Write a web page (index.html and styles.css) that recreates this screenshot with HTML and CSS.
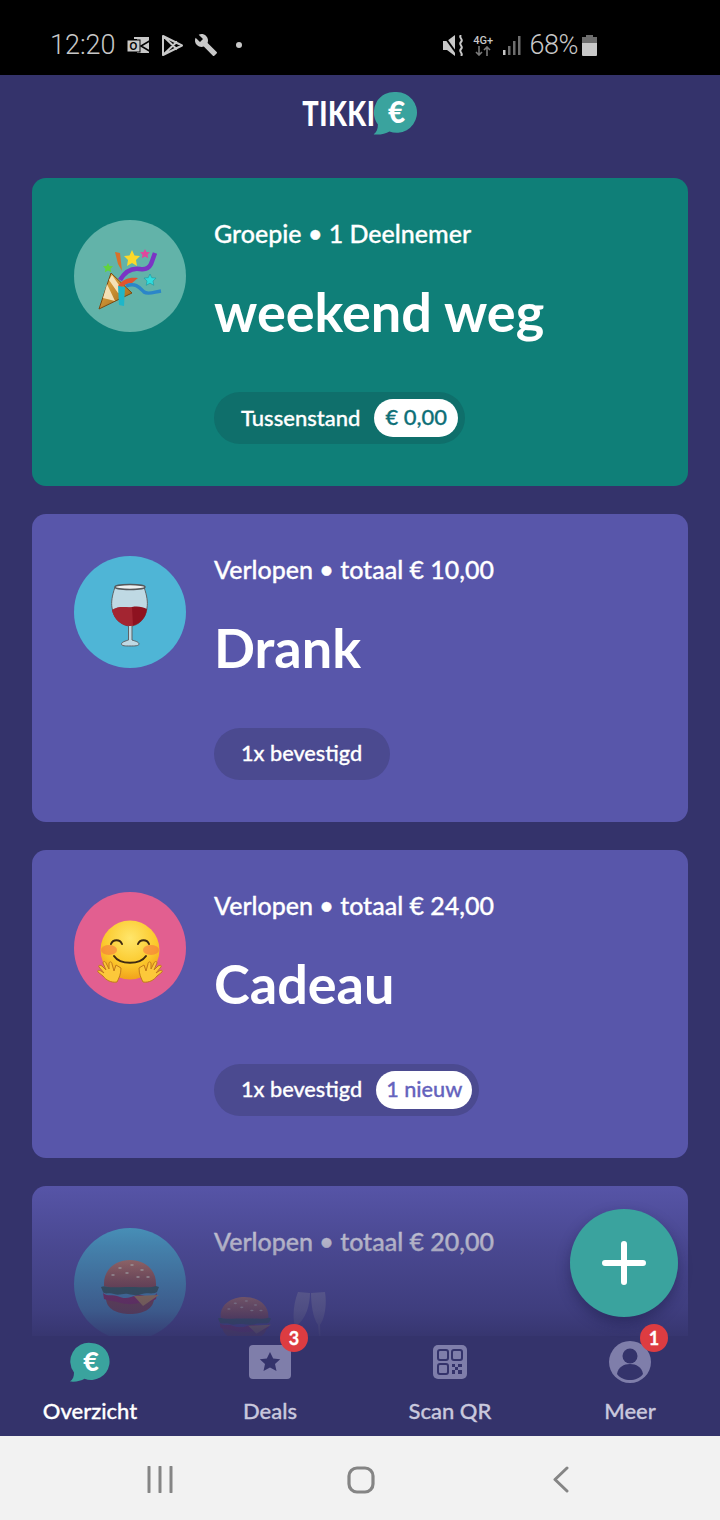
FILE: index.html
```html
<!DOCTYPE html>
<html lang="nl">
   <head>
      <meta charset="utf-8">
      <meta name="viewport" content="width=device-width, initial-scale=1">
      <title>Tikkie overzicht</title>
      <link rel="stylesheet" href="styles.css">
   </head>
   <body>
      <svg class="defs" width="0" height="0" aria-hidden="true">
         <defs>
            <linearGradient id="bun" x1="0" y1="0" x2="0" y2="1">
               <stop offset="0" stop-color="#d98c62"/>
               <stop offset="1" stop-color="#a4523a"/>
            </linearGradient>
            <linearGradient id="gold" x1="0" y1="0" x2="1" y2="1">
               <stop offset="0" stop-color="#f0b548"/>
               <stop offset="1" stop-color="#9a6118"/>
            </linearGradient>
            <radialGradient id="face" cx="0.5" cy="0.3" r="0.75">
               <stop offset="0" stop-color="#ffe66b"/>
               <stop offset="0.6" stop-color="#fbc92c"/>
               <stop offset="1" stop-color="#f09a17"/>
            </radialGradient>
            <symbol id="burger" viewBox="0 0 60 54" preserveAspectRatio="none">
               <path d="M6 38c0 11 11 16 24 16s24-5 24-16z" fill="#9a4c33"/>
               <path d="M3 33c5 4 9 1 14 3s9 3 14 1 9-3 14-1 9 1 12-3l-1 6c-6 4-12 3-17 4s-11 2-18 0-12-2-17-4z" fill="#a8274f"/>
               <path d="M34 36l25-1-16 11z" fill="#e7a93a"/>
               <path d="M1 27c4-2 9 1 14-1s9 2 15 0 9 2 14 0 10-1 15 1l-2 5c-5 3-10 0-15 2s-9 1-14 0-9 2-14 0-9 1-11-2z" fill="#2f6b4a"/>
               <path d="M4 26C3 9 16 0 30 0s27 9 26 26c-5 2-12 1-26 1S9 28 4 26z" fill="url(#bun)"/>
               <g fill="#f3dcae">
                  <ellipse cx="20" cy="8" rx="1.8" ry="1"/>
                  <ellipse cx="32" cy="5" rx="1.8" ry="1"/>
                  <ellipse cx="42" cy="10" rx="1.8" ry="1"/>
                  <ellipse cx="27" cy="13" rx="1.8" ry="1"/>
                  <ellipse cx="13" cy="15" rx="1.8" ry="1"/>
                  <ellipse cx="38" cy="17" rx="1.8" ry="1"/>
                  <ellipse cx="48" cy="17" rx="1.8" ry="1"/>
               </g>
            </symbol>
            <symbol id="bubble" viewBox="0 0 40 40">
               <path d="M21 1a18.500 18.500 0 1 1-6.500 35.800C11 39 6 40 0 39.500c3-2 4-5 4-9A18.500 18.500 0 0 1 21 1z" fill="#3aa39e"/>
               <text x="21" y="29" text-anchor="middle" font-family="Lato, sans-serif" font-weight="900" font-size="27" fill="#fff">€</text>
            </symbol>
         </defs>
      </svg>

      <div class="screen">
         <header class="statusbar">
            <div class="status-left">
               <span class="clock">12:20</span>
               <svg class="st-outlook" width="23" height="16" viewBox="0 0 23 16">
                  <path d="M7 0h15v16H10V2H7z" fill="#c8c8c8"/>
                  <path d="M22.500 4L14 9l8.500 5" fill="none" stroke="#000" stroke-width="1.600"/>
                  <rect x="0" y="3" width="13" height="12" fill="#c8c8c8" stroke="#000" stroke-width="1"/>
                  <text x="6.500" y="12.800" class="st-o">O</text>
               </svg>
               <svg class="st-play" width="23" height="23" viewBox="0 0 23 23">
                  <path d="M2 2l19 9.500-19 9.500zM2 2l10 9.500L2 21M12 11.500l4-4M12 11.500l4 4" fill="none" stroke="#c8c8c8" stroke-width="2" stroke-linejoin="round"/>
               </svg>
               <svg class="st-wrench" width="24" height="24" viewBox="0 0 24 24">
                  <path d="M22.700 19l-9.100-9.100c.9-2.300.4-5-1.500-6.900-2-2-5-2.400-7.400-1.300L9 6 6 9 1.600 4.700C.4 7.100.9 10.100 2.900 12.100c1.900 1.900 4.600 2.400 6.900 1.500l9.100 9.100c.4.400 1 .4 1.400 0l2.300-2.300c.5-.4.5-1.100.1-1.400z" fill="#c8c8c8"/>
               </svg>
               <span class="st-dot"></span>
            </div>
            <div class="status-right">
               <svg width="22" height="21" viewBox="0 0 22 21">
                  <path d="M0 6h4l8-6v21l-8-6H0z" fill="#c8c8c8"/>
                  <path d="M1 1l13 18" stroke="#000" stroke-width="2"/>
                  <path d="M18 0c-3 3 3 4 0 7s3 4 0 7 3 4 0 7" fill="none" stroke="#c8c8c8" stroke-width="2"/>
               </svg>
               <div class="st-net">
                  <span>4G+</span>
                  <svg width="16" height="10" viewBox="0 0 16 10"><path d="M4 0v9M1 6l3 3 3-3M12 10V1M9 4l3-3 3 3" fill="none" stroke="#7a7a7a" stroke-width="1.600"/></svg>
               </div>
               <svg class="st-signal" width="20" height="21" viewBox="0 0 20 21">
                  <path d="M1 15h2.500v5H1z" fill="#c8c8c8"/>
                  <path d="M6 11h2.500v9H6zM11 6h2.500v14H11zM16 1h2.500v19H16z" fill="#6e6e6e"/>
               </svg>
               <span class="clock st-pct">68%</span>
               <svg class="st-batt" width="15" height="21" viewBox="0 0 15 21">
                  <path d="M4 0h7v2h4v6H0V2h4z" fill="#6e6e6e"/>
                  <path d="M0 8h15v12a1 1 0 0 1-1 1H1a1 1 0 0 1-1-1z" fill="#c8c8c8"/>
               </svg>
            </div>
         </header>

         <main class="content">
            <div class="logo">
               <span class="logo-word">TIKKI</span>
               <svg class="logo-mark" width="45" height="44" viewBox="0 0 40 40"><use href="#bubble"/></svg>
            </div>

            <article class="card card-group">
               <div class="avatar avatar-party">
                  <svg width="112" height="112" viewBox="0 0 112 112">
                     <path d="M25 89L37 53l21 20z" fill="url(#gold)" stroke="#7a4a12" stroke-width="1"/>
                     <path d="M29 78l4-14 8 17zM35 60l3-5 11 16-5 2z" fill="#fbeecb" opacity=".85"/>
                     <path d="M41 32l5 1 2 18-4-7z" fill="#d9702a"/>
                     <path d="M44 66c5-7 11-9 20-8l-6 5c-4 0-8 2-12 5z" fill="#e0532f"/>
                     <path d="M46 60c6-10 14-12 20-11 6 1 9-1 11-5l4-11" fill="none" stroke="#7b34c4" stroke-width="4.500"/>
                     <path d="M52 66c10-4 14 2 18 6 4 3 10 0 17-1" fill="none" stroke="#2b86c9" stroke-width="3.500"/>
                     <path d="M44 66l7 1-1 19-5-1z" fill="#1fb6c9"/>
                     <path d="M58 30l2.500 5.500 5.500.5-4 4 1 6-5-3-5 3 1-6-4-4 5.500-.5z" fill="#fcd92a"/>
                     <path d="M71 29l1.500 3 3.500.3-2.500 2.500.7 3.500-3.200-1.800-3.200 1.800.7-3.500-2.500-2.500 3.500-.3z" fill="#e0479d"/>
                     <path d="M34 43l1.500 3 3.500.3-2.500 2.500.7 3.500-3.200-1.800-3.200 1.800.7-3.500-2.500-2.500 3.500-.3z" fill="#62d43b"/>
                     <path d="M76 54l1.800 3.700 4.200.4-3 3 .8 4.200-3.800-2.100-3.800 2.100.8-4.200-3-3 4.200-.4z" fill="#2fdcdc" stroke="#178c96" stroke-width=".5"/>
                  </svg>
               </div>
               <div class="card-body">
                  <p class="card-sub">Groepie • 1 Deelnemer</p>
                  <h2 class="card-title">weekend weg</h2>
                  <div class="pill pill-teal">
                     <span>Tussenstand</span>
                     <span class="chip chip-teal">€ 0,00</span>
                  </div>
               </div>
            </article>

            <article class="card">
               <div class="avatar avatar-wine">
                  <svg width="112" height="112" viewBox="0 0 112 112">
                     <path d="M41 31c-3 9-4 15-3 21 2 11 10 17 16.500 18v14c-3 1-7 2-7 4 0 2 4 2 8.500 2s9 0 9-2c0-2-4-3-7-4V70c6-1 14-7 15-18 1-6 0-12-3-21z" fill="#e4e6e8" fill-opacity=".75" stroke="#5f6265" stroke-width="1"/>
                     <path d="M38 54c8-5 14-2 20-3s11 0 15 2c-1 10-9 17-17 17s-16-6-18-16z" fill="#8e1220"/>
                     <path d="M38 54c8-5 14-2 20-3l1 19c-11 1-19-6-21-16z" fill="#b5353f" opacity=".55"/>
                     <ellipse cx="56" cy="31" rx="15" ry="2.500" fill="#eef0f1" stroke="#55585b" stroke-width="1.500"/>
                  </svg>
               </div>
               <div class="card-body">
                  <p class="card-sub">Verlopen • totaal € 10,00</p>
                  <h2 class="card-title">Drank</h2>
                  <div class="pill">
                     <span>1x bevestigd</span>
                  </div>
               </div>
            </article>

            <article class="card">
               <div class="avatar avatar-hug">
                  <svg width="112" height="112" viewBox="0 0 112 112">
                     <circle cx="56" cy="58" r="29.500" fill="url(#face)"/>
                     <ellipse cx="35" cy="58" rx="8" ry="5" fill="#f4703f" opacity=".55"/>
                     <ellipse cx="77" cy="58" rx="8" ry="5" fill="#f4703f" opacity=".55"/>
                     <path d="M37 52c2-5 9-5 11 0M64 52c2-5 9-5 11 0M40 64c6 9 26 9 32 0" fill="none" stroke="#3f2a12" stroke-width="2" stroke-linecap="round"/>
                     <path d="M43 90c-6 1-11-2-14-6l-5-4c-1-2 1-2 3-1l3 2-5-6c-1-2 1-2 3-1l4 4-3-7c0-2 2-2 3 0l3 6 0-6c1-2 3-1 3 1l2 7 2-6 5 3c0 6-2 10-4 14z" fill="#fcc83a" stroke="#c07a1b" stroke-width="1"/>
                     <path d="M69 90c6 1 11-2 14-6l5-4c1-2-1-2-3-1l-3 2 5-6c1-2-1-2-3-1l-4 4 3-7c0-2-2-2-3 0l-3 6 0-6c-1-2-3-1-3 1l-2 7-2-6-5 3c0 6 2 10 4 14z" fill="#fcc83a" stroke="#c07a1b" stroke-width="1"/>
                  </svg>
               </div>
               <div class="card-body">
                  <p class="card-sub">Verlopen • totaal € 24,00</p>
                  <h2 class="card-title">Cadeau</h2>
                  <div class="pill">
                     <span>1x bevestigd</span>
                     <span class="chip chip-purple">1 nieuw</span>
                  </div>
               </div>
            </article>

            <article class="card">
               <div class="avatar avatar-burger">
                  <svg width="112" height="112" viewBox="0 0 112 112"><use href="#burger" x="26" y="32" width="60" height="54"/></svg>
               </div>
               <div class="card-body">
                  <p class="card-sub">Verlopen • totaal € 20,00</p>
                  <div class="card-title title-icons">
                     <svg class="icon-burger" width="55" height="43"><use href="#burger" width="55" height="43"/></svg>
                     <svg class="icon-glasses" width="36" height="54" viewBox="0 0 36 54">
                        <path d="M6 0l12 1c0 11-4 27-14 33l-1 8h-1l1-8C0 24 2 10 6 0zM19 1l14-1c2 12 0 26-5 33l1 21h-1l-2-21c-5-7-7-21-7-32z" fill="#9a98bd" opacity=".8"/>
                     </svg>
                  </div>
               </div>
            </article>

            <div class="fade"></div>
         </main>

         <button class="fab" aria-label="Nieuw">
            <svg width="44" height="44" viewBox="0 0 44 44"><path d="M22 3v38M3 22h38" stroke="#fff" stroke-width="6" stroke-linecap="round"/></svg>
         </button>

         <nav class="tabs">
            <a class="tab tab-active">
               <span class="tab-icon">
                  <svg width="40" height="40" viewBox="0 0 40 40"><use href="#bubble"/></svg>
               </span>
               Overzicht
            </a>
            <a class="tab">
               <span class="tab-icon">
                  <svg width="42" height="34" viewBox="0 0 42 34">
                     <rect width="42" height="34" rx="4" fill="#7f7eaa"/>
                     <path d="M21 7l3.200 6.500 7 .8-5.200 4.800 1.500 7-6.500-3.600-6.500 3.600 1.500-7-5.200-4.800 7-.8z" fill="#34336b"/>
                  </svg>
                  <span class="badge">3</span>
               </span>
               Deals
            </a>
            <a class="tab">
               <span class="tab-icon">
                  <svg width="34" height="34" viewBox="0 0 34 34">
                     <rect width="34" height="34" rx="5" fill="#7f7eaa"/>
                     <g fill="none" stroke="#34336b" stroke-width="2">
                        <rect x="5" y="5" width="10" height="10" rx="2"/>
                        <rect x="19" y="5" width="10" height="10" rx="2"/>
                        <rect x="5" y="19" width="10" height="10" rx="2"/>
                     </g>
                     <path d="M19 19h3v3h-3zM25 19h4v3h-4zM22 22h3v3h-3zM19 25h3v4h-3zM25 25h4v4h-4z" fill="#34336b"/>
                  </svg>
               </span>
               Scan QR
            </a>
            <a class="tab">
               <span class="tab-icon">
                  <svg width="42" height="42" viewBox="0 0 42 42">
                     <circle cx="21" cy="21" r="21" fill="#7f7eaa"/>
                     <circle cx="21" cy="15" r="7.500" fill="#34336b"/>
                     <path d="M8 33c1-7 7-10 13-10s12 3 13 10c-3 4-8 6-13 6s-10-2-13-6z" fill="#34336b"/>
                  </svg>
                  <span class="badge">1</span>
               </span>
               Meer
            </a>
         </nav>

         <footer class="sysnav">
            <svg width="26" height="27" viewBox="0 0 26 27"><path d="M2 1v25M13 1v25M24 1v25" stroke="#858585" stroke-width="3" stroke-linecap="round"/></svg>
            <svg width="28" height="28" viewBox="0 0 28 28"><rect x="2" y="2" width="24" height="24" rx="8" fill="none" stroke="#858585" stroke-width="3.200"/></svg>
            <svg class="sys-back" width="18" height="27" viewBox="0 0 18 27"><path d="M15 2L3 13.500 15 25" fill="none" stroke="#858585" stroke-width="3" stroke-linecap="round" stroke-linejoin="round"/></svg>
         </footer>
      </div>
   </body>
</html>
```

FILE: styles.css
```css
* {
   box-sizing: border-box;
}
html, body {
   margin: 0;
   padding: 0;
}
body {
   background-color: #34336b;
   font-family: "Lato", "Noto Sans", sans-serif;
   color: #fff;
}
.defs {
   position: absolute;
}
.screen {
   position: relative;
   display: flex;
   flex-direction: column;
   width: 720px;
   height: 1520px;
   overflow: hidden;
}

/* status bar */
.statusbar {
   display: flex;
   flex: none;
   align-items: center;
   justify-content: space-between;
   height: 75px;
   padding: 15px 123px 0 50px;
   background-color: #000;
}
.status-left, .status-right {
   display: flex;
   align-items: center;
}
.clock {
   font-family: "Roboto", sans-serif;
   font-weight: 300;
   font-size: 27px;
   color: #c8c8c8;
}
.st-outlook {
   margin-left: 11px;
}
.st-o {
   font: 700 10px "Liberation Sans", sans-serif;
   text-anchor: middle;
   fill: #000;
}
.st-play {
   margin-left: 11px;
}
.st-wrench {
   margin-left: 10px;
}
.st-dot {
   width: 6px;
   height: 6px;
   margin-left: 18px;
   border-radius: 50%;
   background-color: #c8c8c8;
}
.st-net {
   display: flex;
   flex-direction: column;
   align-items: center;
   width: 21px;
   margin-left: 8px;
   color: #c8c8c8;
   font: 500 11px "Roboto", sans-serif;
   line-height: 11px;
}
.st-signal {
   margin-left: 8px;
}
.st-pct {
   margin-left: 8px;
   letter-spacing: -.5px;
}
.st-batt {
   margin-left: 4px;
}

/* main list */
.content {
   position: relative;
   display: flex;
   flex: 1;
   flex-direction: column;
   gap: 28px;
   min-height: 0;
   padding: 0 32px;
   overflow: hidden;
}
.logo {
   display: flex;
   flex: none;
   align-items: center;
   justify-content: center;
   height: 75px;
}
.logo-word {
   margin-left: -18px;
   font-weight: 900;
   font-size: 34px;
   line-height: 1;
   letter-spacing: .6px;
   transform: scaleX(.8);
   transform-origin: right center;
}
.logo-mark {
   margin-left: -3px;
}
.card {
   display: grid;
   flex: none;
   grid-template-columns: 112px 1fr;
   column-gap: 28px;
   height: 308px;
   padding: 42px;
   border-radius: 14px;
   background-color: #5856aa;
}
.card-group {
   background-color: #0f7f78;
}
.avatar {
   width: 112px;
   height: 112px;
   border-radius: 50%;
}
.avatar-party {
   background-color: #62b3a9;
}
.avatar-wine, .avatar-burger {
   background-color: #4fb5d6;
}
.avatar-hug {
   background-color: #e25f90;
}
.card-sub {
   margin: 0;
   font-size: 25px;
   font-weight: 500;
   line-height: 26px;
   -webkit-text-stroke: .3px #fff;
}
.card-title {
   height: 60px;
   margin: 36px 0 50px;
   font-size: 54px;
   font-weight: 700;
   line-height: 60px;
}
.title-icons {
   display: flex;
   align-items: flex-start;
   gap: 20px;
   margin-top: 43px;
}
.icon-burger {
   margin-left: 3px;
}
.icon-glasses {
   margin-top: -5px;
}
.pill {
   display: inline-flex;
   align-items: center;
   gap: 14px;
   height: 52px;
   padding: 0 7px 2px 27px;
   border-radius: 26px;
   background-color: #4b4a90;
   font-size: 21.700px;
   font-weight: 500;
   -webkit-text-stroke: .3px currentColor;
}
.pill > span:only-child {
   padding-right: 21px;
}
.pill-teal {
   background-color: #0f6f6b;
   font-size: 22px;
}
.chip {
   height: 38px;
   margin-bottom: -2px;
   padding: 0 11px;
   border-radius: 19px;
   background-color: #fff;
   line-height: 36px;
}
.chip-teal {
   color: #0f7078;
}
.chip-purple {
   padding: 0 10px;
   color: #6563bd;
}
.fade {
   position: absolute;
   right: 0;
   bottom: 0;
   left: 0;
   height: 150px;
   background: linear-gradient(rgba(52, 51, 107, .05), rgba(52, 51, 107, .4) 40%, rgba(52, 51, 107, .7) 83%, rgba(52, 51, 107, .92) 100%);
}

/* floating button */
.fab {
   position: absolute;
   top: 1209px;
   left: 570px;
   display: flex;
   align-items: center;
   justify-content: center;
   width: 108px;
   height: 108px;
   padding: 0;
   border: 0;
   border-radius: 50%;
   background-color: #3aa39e;
   box-shadow: 0 6px 14px rgba(20, 20, 60, .4);
}

/* bottom tabs */
.tabs {
   display: grid;
   flex: none;
   grid-template-columns: repeat(4, 180px);
   height: 100px;
   background-color: #34336b;
}
.tab {
   display: flex;
   flex-direction: column;
   align-items: center;
   color: #c9c8dd;
   font-size: 22px;
   font-weight: 500;
   line-height: 28px;
   -webkit-text-stroke: .3px currentColor;
}
.tab-active {
   color: #fff;
}
.tab-icon {
   position: relative;
   display: flex;
   align-items: center;
   justify-content: center;
   height: 42px;
   margin: 5px 0 14px;
}
.badge {
   position: absolute;
   top: -17px;
   right: -17px;
   width: 28px;
   height: 28px;
   border-radius: 50%;
   background-color: #dd3c41;
   color: #fff;
   font-size: 18px;
   font-weight: 700;
   line-height: 28px;
   text-align: center;
}

/* android nav */
.sysnav {
   display: flex;
   flex: none;
   align-items: center;
   gap: 174px;
   height: 84px;
   padding: 3px 0 0 147px;
   background-color: #f2f2f2;
}
.sys-back {
   margin-left: 3px;
}
```
